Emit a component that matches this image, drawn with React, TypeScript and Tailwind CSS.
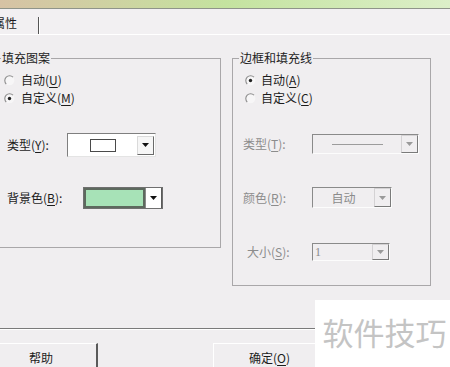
import React from 'react';

// classic win32 radio: grey arc top-left, dot when checked
function Radio({ checked }: { checked?: boolean }) {
  return (
    <svg width="11" height="11" viewBox="0 0 11 11" className="shrink-0">
      <circle cx="5.5" cy="5.5" r="4.8" fill="#f7f6f7" />
      <path d="M9 2.2 A4.8 4.8 0 0 0 2.2 9" stroke="#8c8c8c" strokeWidth="1.1" fill="none" />
      {checked && <circle cx="5.5" cy="5.5" r="1.7" fill="#222" />}
    </svg>
  );
}

function Arrow({ color = '#111' }: { color?: string }) {
  return (
    <svg width="7" height="4" viewBox="0 0 7 4">
      <polygon points="0,0 7,0 3.5,4" fill={color} />
    </svg>
  );
}

function Mn({ text, k, tail = '' }: { text: string; k: string; tail?: string }) {
  return (
    <>
      {text}(<span className="underline underline-offset-2">{k}</span>){tail}
    </>
  );
}

function DisabledCombo({ width, height, children }: { width: string; height: string; children?: React.ReactNode }) {
  return (
    <div className={`flex ${width} ${height} border border-t-[#8a8a8a] border-l-[#8a8a8a] border-b-[#fcfcfc] border-r-[#fcfcfc] bg-[#f0eef0]`}>
      <div className="flex flex-1 items-center text-[#8b8b8b]">{children}</div>
      <div className="flex w-[17px] items-center justify-center border border-[#d4d2d4] border-r-[#7a7a7a] border-b-[#7a7a7a]">
        <Arrow color="#9a9a9a" />
      </div>
    </div>
  );
}

export default function App() {
  return (
    <div className="relative h-[367px] w-[450px] overflow-hidden bg-[#f0eef0] font-['Noto_Sans_CJK_SC','Liberation_Sans',sans-serif] text-[12px] leading-[16px] text-[#1c1c1c]">
      {/* window strip above dialog */}
      <div className="h-[9px] border-b border-[#8f948a] bg-gradient-to-r from-[#d6c2a4] via-[#c4e39f] to-[#dcefc8]" />

      {/* tab row */}
      <div className="flex h-[26px] border-b border-white bg-[#f2f0f2]">
        <div className="flex w-[38px] items-center pt-[3px]">
          <span className="-ml-[7px]">属性</span>
        </div>
        <div className="mt-[8px] h-[17px] w-[2px] border-l border-r border-l-[#555] border-r-white" />
      </div>

      {/* group boxes */}
      <div className="flex h-[293px] items-start gap-[11px] pt-[15px]">
        <fieldset className="-ml-[2px] h-[198px] w-[223px] border border-[#a9a7a9]">
          <legend className="ml-[2px] px-[1px] leading-[16px]">填充图案</legend>
          <div className="pl-[5px] pt-[5px]">
            <div className="flex h-[18px] items-center gap-[6px]">
              <Radio />
              <span><Mn text="自动" k="U" /></span>
            </div>
            <div className="flex h-[18px] items-center gap-[6px]">
              <Radio checked />
              <span><Mn text="自定义" k="M" /></span>
            </div>
          </div>

          <div className="mt-[26px] flex h-[24px] items-center pl-[8px]">
            <span className="w-[60px]"><Mn text="类型" k="Y" tail=":" /></span>
            <div className="flex h-[24px] w-[89px] items-center border border-t-[#7f7f7f] border-l-[#7f7f7f] border-b-[#e4e4e4] border-r-[#e4e4e4] bg-white">
              <div className="flex flex-1 items-center justify-center">
                <div className="h-[13px] w-[26px] border border-[#4a4a4a]" />
              </div>
              <div className="mr-[1px] flex h-[19px] w-[17px] items-center justify-center border border-[#dadada] border-r-[#6a6a6a] border-b-[#6a6a6a] bg-[#f6f6f6]">
                <Arrow />
              </div>
            </div>
          </div>

          <div className="mt-[30px] flex h-[22px] items-center pl-[8px]">
            <span className="w-[76px]"><Mn text="背景色" k="B" tail=":" /></span>
            <div className="flex h-[22px] w-[80px] border border-[#6f6f6f] bg-white">
              <div className="flex-1 border-2 border-[#5d695e] bg-[#a7e2b7]" />
              <div className="flex w-[17px] items-center justify-center border-l border-[#8a8a8a] border-r border-r-[#5a5a5a]">
                <Arrow />
              </div>
            </div>
          </div>
        </fieldset>

        <fieldset className="h-[236px] w-[199px] border border-[#a9a7a9]">
          <legend className="ml-[6px] px-[1px] leading-[16px]">边框和填充线</legend>
          <div className="pl-[12px] pt-[5px]">
            <div className="flex h-[18px] items-center gap-[5px]">
              <Radio checked />
              <span><Mn text="自动" k="A" /></span>
            </div>
            <div className="flex h-[18px] items-center gap-[5px]">
              <Radio />
              <span><Mn text="自定义" k="C" /></span>
            </div>
          </div>

          <div className="text-[#8c8c8c]">
            <div className="mt-[27px] flex h-[20px] items-center pl-[10px]">
              <span className="w-[69px]"><Mn text="类型" k="T" tail=":" /></span>
              <DisabledCombo width="w-[107px]" height="h-[20px]">
                <div className="mx-auto h-px w-[51px] bg-[#9c9c9c]" />
              </DisabledCombo>
            </div>
            <div className="mt-[33px] flex h-[21px] items-center pl-[10px]">
              <span className="w-[69px]"><Mn text="颜色" k="R" tail=":" /></span>
              <DisabledCombo width="w-[80px]" height="h-[21px]">
                <span className="mx-auto">自动</span>
              </DisabledCombo>
            </div>
            <div className="mt-[35px] flex h-[18px] items-center pl-[10px]">
              <span className="w-[69px] pl-[4px]"><Mn text="大小" k="S" tail=":" /></span>
              <DisabledCombo width="w-[78px]" height="h-[18px]">
                <span className="pl-[2px] font-['Liberation_Serif',serif]">1</span>
              </DisabledCombo>
            </div>
          </div>
        </fieldset>
      </div>

      {/* separator + buttons */}
      <div className="h-[2px] border-t border-[#7a7a7a] bg-white" />
      <div className="mt-[13px] flex">
        <div className="-ml-[14px] flex h-[26px] w-[112px] justify-center border-t border-r-2 border-t-white border-r-[#5a5a5a] pt-[6px]">
          帮助
        </div>
        <div className="ml-[115px] flex h-[26px] w-[112px] justify-center border-t border-l border-white pt-[6px]">
          <span>确定(<span className="underline underline-offset-2">O</span>)</span>
        </div>
      </div>

      {/* watermark */}
      <div className="absolute right-0 top-[300px] flex h-[67px] w-[135px] items-center justify-center bg-white pb-[4px] pl-[4px] text-[31px] leading-none text-[#c4c4c4]">
        软件技巧
      </div>
    </div>
  );
}
